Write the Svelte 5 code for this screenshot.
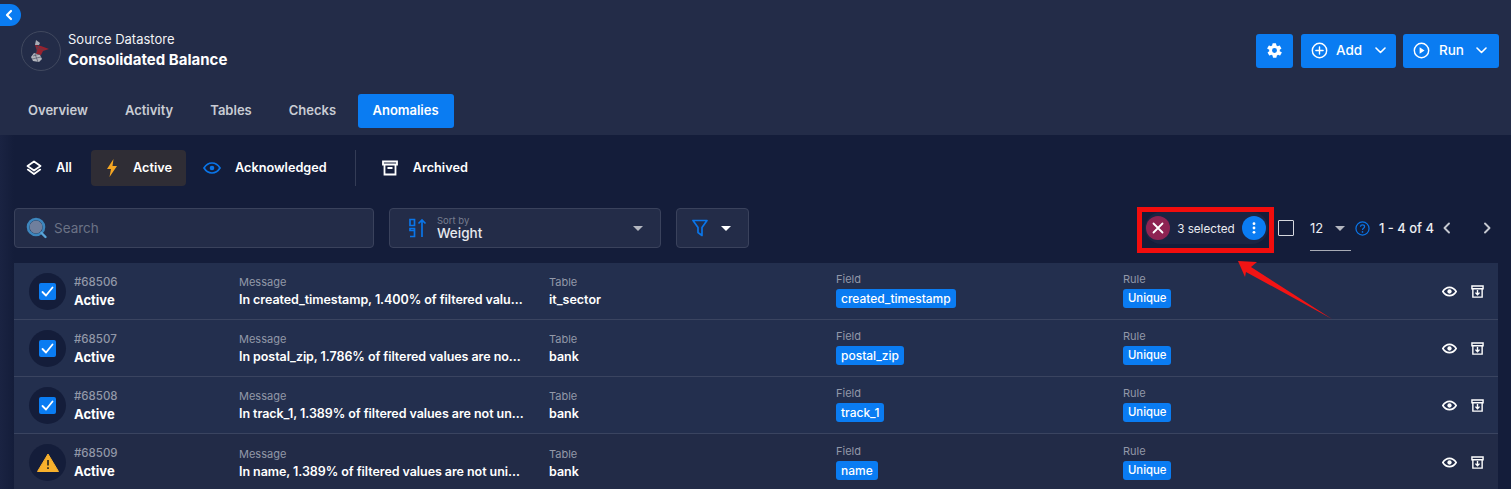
<script>
	const anomalies = [
		{ id: 68506, message: 'In created_timestamp, 1.400% of filtered values are not unique', table: 'it_sector', field: 'created_timestamp', checked: true },
		{ id: 68507, message: 'In postal_zip, 1.786% of filtered values are not unique', table: 'bank', field: 'postal_zip', checked: true },
		{ id: 68508, message: 'In track_1, 1.389% of filtered values are not unique', table: 'bank', field: 'track_1', checked: true },
		{ id: 68509, message: 'In name, 1.389% of filtered values are not unique', table: 'bank', field: 'name', checked: false }
	];
	const tabs = ['Overview', 'Activity', 'Tables', 'Checks', 'Anomalies'];
</script>

<div class="page">
	<button class="collapse" aria-label="Collapse">
		<svg width="10" height="12" viewBox="0 0 10 12"><path d="M7 2 3 6l4 4" fill="none" stroke="#fff" stroke-width="2.2" stroke-linecap="round" stroke-linejoin="round" /></svg>
	</button>

	<header class="top">
		<div class="title-row">
			<div class="brand">
				<div class="logo">
					<svg width="20" height="22" viewBox="0 0 20 22">
						<path d="M5 0l4 3-1 2H4z" fill="#a9adb6" />
						<path d="M4 5l6 1 8 3-6 2-2 4-6 1 2-5z" fill="#96222f" />
						<path d="M3 13l6 2 2 4-3 3-6-1-2-4z" fill="#b4b6bd" />
						<path d="M5 7l8 3M8 5l-3 8M2 16l7-2M1 19l9-2M4 14l3 8" stroke="#444a5c" stroke-width=".6" />
					</svg>
				</div>
				<div class="brand-text">
					<div class="kicker">Source Datastore</div>
					<div class="name">Consolidated Balance</div>
				</div>
			</div>
			<div class="actions">
				<button class="btn square" aria-label="Settings">
					<svg width="17" height="17" viewBox="0 0 24 24"><path fill="#fff" fill-rule="evenodd" d="M19.4 13a7.5 7.5 0 0 0 0-2l2.1-1.6a.6.6 0 0 0 .1-.7l-2-3.4a.6.6 0 0 0-.7-.3l-2.5 1a7.6 7.6 0 0 0-1.7-1l-.4-2.6a.6.6 0 0 0-.6-.5h-4a.6.6 0 0 0-.6.5l-.4 2.6a7.6 7.6 0 0 0-1.7 1l-2.5-1a.6.6 0 0 0-.7.3l-2 3.4a.6.6 0 0 0 .1.7L4.6 11a7.5 7.5 0 0 0 0 2l-2.1 1.6a.6.6 0 0 0-.1.7l2 3.4c.1.3.4.4.7.3l2.5-1c.5.4 1.1.7 1.7 1l.4 2.6c0 .3.3.5.6.5h4c.3 0 .6-.2.6-.5l.4-2.6c.6-.3 1.2-.6 1.7-1l2.5 1c.3.1.6 0 .7-.3l2-3.4a.6.6 0 0 0-.1-.7zM12 15.5a3.5 3.5 0 1 1 0-7 3.5 3.5 0 0 1 0 7z" /></svg>
				</button>
				<button class="btn add">
					<svg width="17" height="17" viewBox="0 0 18 18"><circle cx="9" cy="9" r="7.6" fill="none" stroke="#fff" stroke-width="1.5" /><path d="M9 5.2v7.6M5.2 9h7.6" stroke="#fff" stroke-width="1.5" stroke-linecap="round" /></svg>
					<span>Add</span>
					<svg class="chev" width="11" height="7" viewBox="0 0 11 7"><path d="M1 1l4.500 4.500L10 1" fill="none" stroke="#fff" stroke-width="1.600" stroke-linecap="round" stroke-linejoin="round" /></svg>
				</button>
				<button class="btn run">
					<svg width="17" height="17" viewBox="0 0 18 18"><circle cx="9" cy="9" r="7.6" fill="none" stroke="#fff" stroke-width="1.5" /><path d="M7 5.600v6.800L12.200 9z" fill="#fff" /></svg>
					<span>Run</span>
					<svg class="chev" width="11" height="7" viewBox="0 0 11 7"><path d="M1 1l4.500 4.500L10 1" fill="none" stroke="#fff" stroke-width="1.600" stroke-linecap="round" stroke-linejoin="round" /></svg>
				</button>
			</div>
		</div>
		<nav class="tabs">
			{#each tabs as tab}
				<div class="tab" class:current={tab === 'Anomalies'}>{tab}</div>
			{/each}
		</nav>
	</header>

	<main class="content">
		<div class="status-row">
			<div class="status">
				<svg width="16" height="17" viewBox="0 0 16 17"><path d="M8 1.500 14.500 6 8 10.500 1.500 6z" fill="none" stroke="#fff" stroke-width="1.800" stroke-linejoin="round" /><path d="M1.800 9.600 8 14l6.200-4.400" fill="none" stroke="#fff" stroke-width="1.800" stroke-linecap="round" stroke-linejoin="round" /></svg>
				<span>All</span>
			</div>
			<div class="status active">
				<svg width="12" height="18" viewBox="0 0 12 18"><path d="M7.500 0 1 10h4l-1.500 8L11 7H6.500z" fill="#f5a623" /></svg>
				<span>Active</span>
			</div>
			<div class="status ack">
				<svg width="18" height="12" viewBox="0 0 18 12"><path d="M1 6c2-3.200 4.800-5 8-5s6 1.800 8 5c-2 3.200-4.800 5-8 5S3 9.200 1 6z" fill="none" stroke="#0a75e8" stroke-width="1.700" /><circle cx="9" cy="6" r="2.300" fill="#0a75e8" /></svg>
				<span>Acknowledged</span>
			</div>
			<div class="divider"></div>
			<div class="status arch">
				<svg width="16" height="16" viewBox="0 0 16 16"><path d="M1 1.500h14v3H1zM2.500 4.500h11v10h-11zM5.500 8h5" fill="none" stroke="#fff" stroke-width="1.800" /></svg>
				<span>Archived</span>
			</div>
		</div>

		<div class="controls">
			<div class="search">
				<svg width="22" height="22" viewBox="0 0 22 22">
					<circle cx="10" cy="10" r="6.500" fill="#6f7f9d" />
					<circle cx="10" cy="10" r="8" fill="none" stroke="#3d86bd" stroke-width="2.600" />
					<path d="M15.500 16l4 4" stroke="#5aa5d8" stroke-width="2.400" stroke-linecap="round" />
				</svg>
				<span>Search</span>
			</div>
			<div class="sort">
				<svg class="sort-icon" width="18" height="20" viewBox="0 0 18 20">
					<path d="M1 1.500h4.500v6H1zM5.500 12.500H1v-2h4.500zM5.500 10.500v8H1" fill="none" stroke="#0a75e8" stroke-width="1.700" />
					<path d="M13 19V2M9.500 5.500 13 2l3.500 3.500" fill="none" stroke="#0a75e8" stroke-width="1.700" />
				</svg>
				<div class="sort-text">
					<small>Sort by</small>
					<b>Weight</b>
				</div>
				<i class="caret dim"></i>
			</div>
			<div class="filter">
				<svg width="16" height="18" viewBox="0 0 16 18"><path d="M1 1.500h14L10 8.500v8l-4-3v-5z" fill="none" stroke="#0a75e8" stroke-width="1.700" stroke-linejoin="round" /></svg>
				<i class="caret"></i>
			</div>

			<div class="right">
				<div class="selected">
					<span class="clear">
						<svg width="12" height="12" viewBox="0 0 12 12"><path d="M1.500 1.500l9 9M10.500 1.500l-9 9" stroke="#fff" stroke-width="1.800" stroke-linecap="round" /></svg>
					</span>
					<span class="count">3 selected</span>
					<span class="more">
						<svg width="4" height="12" viewBox="0 0 4 12"><circle cx="2" cy="1.700" r="1.400" fill="#fff" /><circle cx="2" cy="6" r="1.400" fill="#fff" /><circle cx="2" cy="10.300" r="1.400" fill="#fff" /></svg>
					</span>
				</div>
				<span class="box"></span>
				<div class="per-page">
					<span>12</span>
					<i class="caret dim"></i>
				</div>
				<svg class="help" width="15" height="15" viewBox="0 0 16 16"><circle cx="8" cy="8" r="7" fill="none" stroke="#0a75e8" stroke-width="1.300" /><path d="M5.800 6.200C5.900 4.900 6.800 4.200 8 4.200s2.200.8 2.200 1.900c0 1.700-2.200 1.700-2.200 3.400" fill="none" stroke="#0a75e8" stroke-width="1.300" /><circle cx="8" cy="11.600" r=".9" fill="#0a75e8" /></svg>
				<span class="range">1 - 4 of 4</span>
				<svg class="prev" width="9" height="12" viewBox="0 0 9 12"><path d="M7 1.500 2.500 6 7 10.500" fill="none" stroke="#c5c8d0" stroke-width="1.900" stroke-linecap="round" stroke-linejoin="round" /></svg>
				<svg class="next" width="9" height="12" viewBox="0 0 9 12"><path d="M2 1.500 6.500 6 2 10.500" fill="none" stroke="#c5c8d0" stroke-width="1.900" stroke-linecap="round" stroke-linejoin="round" /></svg>
			</div>
		</div>

		<div class="list">
			{#each anomalies as a}
				<div class="row">
					<div class="mark">
						{#if a.checked}
							<span class="tick">
								<svg width="13" height="11" viewBox="0 0 13 11"><path d="M1.500 6l3.500 3.500L11.500 1.500" fill="none" stroke="#fff" stroke-width="1.800" stroke-linecap="round" stroke-linejoin="round" /></svg>
							</span>
						{:else}
							<svg width="22" height="19" viewBox="0 0 22 19"><path d="M11 1 21.500 18.500H.5z" fill="#f7b02c" stroke="#f7b02c" stroke-linejoin="round" /><path d="M11 7v5.500M11 14.200v1.800" stroke="#3a3320" stroke-width="1.800" /></svg>
						{/if}
					</div>
					<div class="ident">
						<div class="num">#{a.id}</div>
						<div class="state">Active</div>
					</div>
					<div class="cell msg">
						<div class="label">Message</div>
						<div class="value trunc">{a.message}</div>
					</div>
					<div class="cell">
						<div class="label">Table</div>
						<div class="value">{a.table}</div>
					</div>
					<div class="cell raised">
						<div class="label">Field</div>
						<span class="tag">{a.field}</span>
					</div>
					<div class="cell raised">
						<div class="label">Rule</div>
						<span class="tag rule">Unique</span>
					</div>
					<div class="row-icons">
						<svg width="15" height="11" viewBox="0 0 18 12"><path d="M1 6c2-3.200 4.800-5 8-5s6 1.800 8 5c-2 3.200-4.800 5-8 5S3 9.200 1 6z" fill="none" stroke="#fff" stroke-width="2" /><circle cx="9" cy="6" r="2.600" fill="#fff" /></svg>
						<svg width="13" height="13" viewBox="0 0 14 14"><path d="M1 1h12v3H1zM2 4h10v9H2z" fill="none" stroke="#fff" stroke-width="1.500" /><path d="M7 5.500v5M4.800 8.200 7 10.500l2.200-2.300" fill="none" stroke="#fff" stroke-width="1.500" /></svg>
					</div>
				</div>
			{/each}
		</div>
	</main>

	<!-- annotation drawn over the screenshot -->
	<div class="highlight"></div>
	<svg class="arrow" width="110" height="70" viewBox="0 0 110 70">
		<path d="M8 1 27 2 21 7 102 59 16 12 15 17z" fill="#f21414" />
	</svg>
</div>

<style>
	:global(body) {
		margin: 0;
		background: #141d3a;
	}
	.page {
		position: relative;
		height: 489px;
		overflow: hidden;
		font-family: Inter, "Noto Sans", sans-serif;
		color: #fff;
		background: #141d3a;
	}
	.collapse {
		position: absolute;
		left: 0;
		top: 4px;
		width: 21px;
		height: 22px;
		padding: 0 4px 0 0;
		border: 0;
		border-radius: 0 11px 11px 0;
		background: #0a7cf2;
		display: flex;
		align-items: center;
		justify-content: center;
	}
	.top {
		height: 135px;
		box-sizing: border-box;
		background: #232c48;
		padding: 31px 12px 0 21px;
	}
	.title-row {
		display: flex;
		justify-content: space-between;
		height: 63px;
	}
	.brand {
		display: flex;
		gap: 7px;
		height: 40px;
	}
	.logo {
		width: 38px;
		height: 38px;
		border: 1px solid #41495f;
		border-radius: 50%;
		display: flex;
		align-items: center;
		justify-content: center;
	}
	.brand-text {
		padding-top: 1px;
	}
	.kicker {
		font-size: 13px;
		line-height: 15px;
		color: #f2f3f6;
	}
	.name {
		margin-top: 4px;
		font-size: 15px;
		line-height: 18px;
		font-weight: 700;
	}
	.actions {
		display: flex;
		gap: 7px;
		padding-top: 3px;
	}
	.btn {
		height: 34px;
		border: 0;
		border-radius: 3px;
		background: #0a7cf2;
		color: #fff;
		font: 500 13.5px/30px Inter, sans-serif;
		display: flex;
		align-items: center;
		padding: 0 0 2px 10px;
		box-sizing: border-box;
	}
	.btn span {
		margin-left: 9px;
	}
	.btn .chev {
		margin-left: 12px;
	}
	.add span {
		margin-left: 8px;
	}
	.add .chev {
		margin-left: 13px;
	}
	.square {
		width: 37px;
		margin-right: 1px;
		padding: 0 0 2px;
		justify-content: center;
	}
	.add {
		width: 95px;
	}
	.run {
		width: 96px;
	}
	.tabs {
		display: flex;
		align-items: center;
		height: 34px;
		padding-left: 7px;
	}
	.tab {
		padding: 0 21px 0 0;
		margin: 0 16px 2px 0;
		font-size: 13px;
		font-weight: 600;
		color: #c9ccd4;
		line-height: 32px;
	}
	.tab:nth-child(4) {
		margin-right: 0;
	}
	.tab.current {
		width: 96px;
		box-sizing: border-box;
		padding: 0;
		margin: 0 0 0 .5px;
		text-align: center;
		background: #0a7cf2;
		border-radius: 3px;
		color: #fff;
		height: 34px;
	}
	.content {
		padding: 15px 13px 0 14px;
		height: 354px;
		box-sizing: border-box;
		background: linear-gradient(90deg, #1a2342, #141d3a 14px);
	}
	.status-row {
		display: flex;
		align-items: center;
		height: 36px;
		font-size: 12.700px;
		font-weight: 600;
	}
	.status {
		display: flex;
		align-items: center;
		height: 36px;
		box-sizing: border-box;
		line-height: 34px;
	}
	.status:first-child {
		width: 77px;
		padding-left: 12px;
		gap: 14px;
	}
	.status.active {
		width: 95px;
		padding-left: 15px;
		gap: 15px;
		background: #2f2d35;
		border-radius: 4px;
	}
	.status.ack {
		margin-left: 17px;
		gap: 14px;
	}
	.divider {
		width: 1px;
		height: 36px;
		margin-left: 28px;
		background: #343c56;
	}
	.status.arch {
		margin-left: 26px;
		gap: 15px;
	}
	.controls {
		display: flex;
		align-items: center;
		margin-top: 22px;
		height: 40px;
	}
	.search,
	.sort,
	.filter {
		height: 40px;
		box-sizing: border-box;
		background: #232c48;
		border: 1px solid #3a425c;
		border-radius: 4px;
		display: flex;
		align-items: center;
	}
	.search {
		width: 360px;
		padding-left: 11px;
		gap: 6px;
		font-size: 13.500px;
		color: #6b7285;
	}
	.sort {
		width: 272px;
		margin-left: 15px;
		padding-left: 19px;
	}
	.sort-icon {
		flex: none;
	}
	.sort-text {
		margin-left: 10px;
		flex: 1;
		display: flex;
		flex-direction: column;
	}
	.sort-text small {
		font-size: 9.500px;
		line-height: 10px;
		color: #777d8e;
	}
	.sort-text b {
		font-size: 13.500px;
		line-height: 15px;
		font-weight: 500;
		color: #e8e9ee;
	}
	.sort .caret {
		margin-right: 17px;
	}
	.filter {
		width: 73px;
		margin-left: 15px;
		padding-left: 15px;
		gap: 13px;
	}
	.caret {
		display: block;
		width: 0;
		height: 0;
		border-left: 5.500px solid transparent;
		border-right: 5.500px solid transparent;
		border-top: 5.500px solid #fff;
	}
	.caret.dim {
		border-top-color: #b4b7c0;
	}
	.right {
		margin-left: auto;
		display: flex;
		align-items: center;
		height: 40px;
	}
	.selected {
		width: 123px;
		height: 32px;
		display: flex;
		align-items: center;
		justify-content: space-between;
		padding: 0 2px 0 1px;
		box-sizing: border-box;
		font-size: 11.700px;
		background: #1b2442;
		border-radius: 16px;
		color: #e9eaf0;
	}
	.count {
		padding-top: 1px;
	}
	.clear,
	.more {
		width: 24px;
		height: 24px;
		border-radius: 50%;
		display: flex;
		align-items: center;
		justify-content: center;
	}
	.clear {
		background: #8e2352;
	}
	.more {
		background: #0a7cf2;
	}
	.box {
		width: 14px;
		height: 14px;
		margin-left: 10px;
		border: 1px solid #d6d8de;
		border-radius: 1px;
	}
	.per-page {
		width: 41px;
		height: 40px;
		box-sizing: border-box;
		margin: 6px 0 0 16px;
		border-bottom: 1px solid #a8abb5;
		display: flex;
		align-items: center;
		gap: 12px;
		padding-bottom: 5px;
		font-size: 13px;
		color: #eceef2;
	}
	.help {
		margin-left: 4px;
	}
	.range {
		margin-left: 9px;
		font-size: 13px;
		font-weight: 500;
		color: #eceef2;
	}
	.prev {
		margin-left: 8px;
	}
	.next {
		margin: 0 6px 0 32px;
	}
	.list {
		margin-top: 15px;
	}
	.row {
		display: grid;
		grid-template-columns: 60px 165px 310px 287px 287px 1fr 80px;
		align-items: center;
		height: 57px;
		box-sizing: border-box;
		background: #232f4e;
		border-bottom: 1px solid #3a4460;
	}
	.row:last-child {
		border-bottom: 0;
		background: #222b47;
	}
	.mark {
		width: 37px;
		height: 37px;
		margin-left: 15px;
		border-radius: 50%;
		background: #141d3a;
		display: flex;
		align-items: center;
		justify-content: center;
	}
	.tick {
		width: 17px;
		height: 17px;
		border-radius: 2px;
		background: #0a7cf2;
		display: flex;
		align-items: center;
		justify-content: center;
	}
	.num {
		font-size: 11.500px;
		line-height: 14px;
		font-weight: 500;
		color: #9298a8;
	}
	.state {
		margin-top: 3px;
		font-size: 13px;
		line-height: 16px;
		font-weight: 700;
	}
	.cell {
		min-width: 0;
		padding-top: 1px;
	}
	.cell.raised {
		padding-top: 0;
		margin-top: -1px;
	}
	.msg {
		padding-right: 24px;
	}
	.label {
		font-size: 11px;
		line-height: 13px;
		color: #9298a8;
	}
	.value {
		margin-top: 3px;
		font-size: 12.500px;
		line-height: 15px;
		font-weight: 600;
	}
	.trunc {
		overflow: hidden;
		white-space: nowrap;
		text-overflow: ellipsis;
		letter-spacing: -0.06px;
	}
	.tag {
		display: block;
		width: fit-content;
		margin-top: 3px;
		padding: 0 5px;
		height: 19px;
		line-height: 19px;
		font-size: 12px;
		font-weight: 500;
		background: #0a7cf2;
		border-radius: 3px;
	}
	.tag.rule {
		font-size: 11.300px;
	}
	.row-icons {
		display: flex;
		align-items: center;
		justify-content: flex-end;
		gap: 14px;
		padding-right: 14px;
	}
	.highlight {
		position: absolute;
		left: 1137px;
		top: 207px;
		width: 137px;
		height: 46px;
		box-sizing: border-box;
		border: 5px solid #f20d0d;
	}
	.arrow {
		position: absolute;
		left: 1230px;
		top: 260px;
	}
</style>
